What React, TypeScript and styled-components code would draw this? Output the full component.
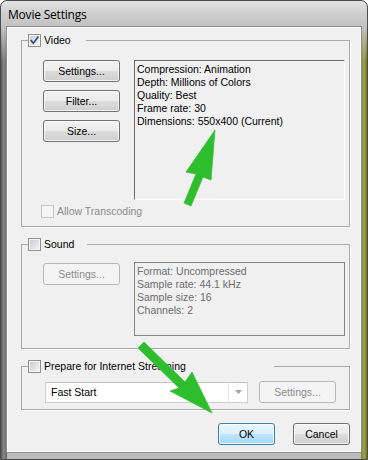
import React from "react";
import styled, { createGlobalStyle } from "styled-components";

const Global = createGlobalStyle`
  html, body { margin: 0; padding: 0; background: #ffffff; }
  body { font-family: "Liberation Sans", Arial, sans-serif; }
  #root { width: 368px; height: 460px; }
`;

const Window = styled.div`
  position: relative;
  width: 368px;
  height: 460px;
  box-sizing: border-box;
  border: 1px solid #4a4a4a;
  border-radius: 7px 7px 0 0;
  display: flex;
  flex-direction: column;
  padding: 0 6px 7px 6px;
  overflow: hidden;
  background:
    linear-gradient(to bottom, #e2e2e2 0px, #cdcdcd 14px, #c2c2c2 26px, rgba(194,194,194,0) 60px) top left / 100% 60px no-repeat,
    linear-gradient(to right, #585858, #8a8a8a 45%, #606060) left top / 6px 100% no-repeat,
    linear-gradient(to right, #7a7f2e, #a2a44c 50%, #6f7428) right top / 6px 100% no-repeat,
    linear-gradient(to bottom, #c4c4c4, #bcbcbc);
`;

const TitleBar = styled.div`
  height: 26px;
  flex: none;
  display: flex;
  align-items: center;
  padding-left: 1px;
  font-family: "Open Sans", "Noto Sans", sans-serif;
  font-size: 12px;
  letter-spacing: -0.2px;
  color: #000;
`;

const Client = styled.div`
  flex: 1;
  background: #f0f0f0;
  border: 1px solid #fbfbfb;
  box-shadow: 0 0 0 1px #8c8c8c;
  display: flex;
  flex-direction: column;
  padding: 6px 0 0 13px;
  font-family: "Liberation Sans", Arial, sans-serif;
  font-size: 10.5px;
  line-height: 13px;
  color: #000;
`;

const Group = styled.fieldset<{ $mt: number }>`
  margin: ${(p) => p.$mt}px 0 0 0;
  padding: 0;
  width: 329px;
  box-sizing: border-box;
  border: 1px solid #a9a9a9;
  box-shadow: 1px 1px 0 #ffffff;
  min-inline-size: 0;
`;

const Legend = styled.legend<{ $w: number }>`
  padding: 0;
  margin-left: 6px;
  width: ${(p) => p.$w}px;
  height: 13px;
  display: flex;
  align-items: center;
  gap: 3px;
`;

const Label = styled.span<{ $disabled?: boolean }>`
  color: ${(p) => (p.$disabled ? "#8c8c8c" : "#000")};
  white-space: nowrap;
`;

const Box = styled.span<{ $disabled?: boolean }>`
  width: 13px;
  height: 13px;
  flex: none;
  box-sizing: border-box;
  border: 1px solid ${(p) => (p.$disabled ? "#c6c6c6" : "#8e8f8f")};
  background: ${(p) =>
    p.$disabled
      ? "#f4f4f4"
      : "linear-gradient(135deg, #cbcdd0 10%, #f3f3f3 90%)"};
  box-shadow: inset 0 0 0 1px ${(p) => (p.$disabled ? "#f4f4f4" : "#f5f5f5")};
  display: flex;
  align-items: center;
  justify-content: center;
`;

const Body = styled.div<{ $pt: number; $pb: number; $pl: number }>`
  padding: ${(p) => p.$pt}px 0 ${(p) => p.$pb}px ${(p) => p.$pl}px;
  display: flex;
  flex-direction: column;
`;

const MediaRow = styled.div`
  display: flex;
  gap: 14px;
  align-items: flex-start;
`;

const ButtonColumn = styled.div<{ $mt: number }>`
  display: flex;
  flex-direction: column;
  gap: 8px;
  width: 77px;
  margin-top: ${(p) => p.$mt}px;
`;

const InfoBox = styled.div<{ $h: number; $disabled?: boolean }>`
  width: 211px;
  height: ${(p) => p.$h}px;
  box-sizing: border-box;
  padding: 2px;
  border: 1px solid;
  border-color: ${(p) =>
    p.$disabled ? "#858585" : "#6b6b6b #ffffff #ffffff #6b6b6b"};
  color: ${(p) => (p.$disabled ? "#6d6d6d" : "#000")};
  white-space: nowrap;
`;

const CheckRow = styled.div<{ $mt: number; $ml: number }>`
  display: flex;
  align-items: center;
  gap: 3px;
  height: 13px;
  margin-top: ${(p) => p.$mt}px;
  margin-left: ${(p) => p.$ml}px;
`;

type Variant = "normal" | "primary" | "disabled";

const Button = styled.button<{ $variant: Variant; $w: number }>`
  width: ${(p) => p.$w}px;
  height: 22px;
  flex: none;
  box-sizing: border-box;
  padding: 0;
  border-radius: 3px;
  font: inherit;
  cursor: default;
  border: 1px solid
    ${(p) =>
      p.$variant === "primary"
        ? "#3c7fb1"
        : p.$variant === "disabled"
        ? "#b5b9bc"
        : "#707070"};
  color: ${(p) => (p.$variant === "disabled" ? "#8c8c8c" : "#000")};
  background: ${(p) =>
    p.$variant === "primary"
      ? "linear-gradient(to bottom, #eaf6fd 0%, #d9f0fc 50%, #bee6fd 50%, #a7d9f5 100%)"
      : p.$variant === "disabled"
      ? "#f4f4f4"
      : "linear-gradient(to bottom, #f2f2f2 0%, #ebebeb 50%, #dddddd 50%, #cfcfcf 100%)"};
  box-shadow: inset 0 0 0 1px
    ${(p) => (p.$variant === "disabled" ? "#f4f4f4" : "rgba(255,255,255,0.75)")};
`;

const StreamRow = styled.div`
  display: flex;
  align-items: center;
  gap: 11px;
  height: 22px;
`;

const Combo = styled.div`
  width: 203px;
  height: 21px;
  box-sizing: border-box;
  border: 1px solid #cfcfcf;
  border-top-color: #c3c3c3;
  background: #ffffff;
  display: flex;
  align-items: stretch;
`;

const ComboText = styled.span`
  flex: 1;
  display: flex;
  align-items: center;
  padding-left: 5px;
`;

const ComboArrow = styled.span`
  width: 18px;
  border-left: 1px solid #e6e6e6;
  display: flex;
  align-items: center;
  justify-content: center;
`;

const Footer = styled.div`
  width: 329px;
  display: flex;
  justify-content: flex-end;
  gap: 18px;
  margin-top: 13px;
`;

const Overlay = styled.svg`
  position: absolute;
  left: -1px;
  top: -1px;
  width: 368px;
  height: 460px;
  pointer-events: none;
`;

const Check: React.FC<{ checked?: boolean; disabled?: boolean }> = ({
  checked,
  disabled,
}) => (
  <Box $disabled={disabled}>
    {checked && (
      <svg width="11" height="11" viewBox="0 0 11 11">
        <path
          d="M2.2 5.6 L4.3 8.2 L8.9 2.2"
          fill="none"
          stroke="#2f4c8c"
          strokeWidth="1.7"
          strokeLinecap="square"
        />
      </svg>
    )}
  </Box>
);

export default function App() {
  return (
    <>
      <Global />
      <Window>
        <TitleBar>Movie Settings</TitleBar>
        <Client>
          <Group $mt={0}>
            <Legend $w={58}>
              <Check checked />
              <Label>Video</Label>
            </Legend>
            <Body $pt={13} $pb={8} $pl={21}>
              <MediaRow>
                <ButtonColumn $mt={0}>
                  <Button $variant="normal" $w={77}>Settings...</Button>
                  <Button $variant="normal" $w={77}>Filter...</Button>
                  <Button $variant="normal" $w={77}>Size...</Button>
                </ButtonColumn>
                <InfoBox $h={140}>
                  <div>Compression: Animation</div>
                  <div>Depth: Millions of Colors</div>
                  <div>Quality: Best</div>
                  <div>Frame rate: 30</div>
                  <div>Dimensions: 550x400 (Current)</div>
                </InfoBox>
              </MediaRow>
              <CheckRow $mt={5} $ml={-2}>
                <Check disabled />
                <Label $disabled>Allow Transcoding</Label>
              </CheckRow>
            </Body>
          </Group>

          <Group $mt={11}>
            <Legend $w={59}>
              <Check />
              <Label>Sound</Label>
            </Legend>
            <Body $pt={11} $pb={12} $pl={21}>
              <MediaRow>
                <ButtonColumn $mt={1}>
                  <Button $variant="disabled" $w={77}>Settings...</Button>
                </ButtonColumn>
                <InfoBox $h={74} $disabled>
                  <div>Format: Uncompressed</div>
                  <div>Sample rate: 44.1 kHz</div>
                  <div>Sample size: 16</div>
                  <div>Channels: 2</div>
                </InfoBox>
              </MediaRow>
            </Body>
          </Group>

          <Group $mt={11}>
            <Legend $w={246}>
              <Check />
              <Label>Prepare for Internet Streaming</Label>
            </Legend>
            <Body $pt={8} $pb={6} $pl={23}>
              <StreamRow>
                <Combo>
                  <ComboText>Fast Start</ComboText>
                  <ComboArrow>
                    <svg width="7" height="4" viewBox="0 0 7 4">
                      <path d="M0 0 H7 L3.5 4 Z" fill="#a2a2a2" />
                    </svg>
                  </ComboArrow>
                </Combo>
                <Button $variant="disabled" $w={77}>Settings...</Button>
              </StreamRow>
            </Body>
          </Group>

          <Footer>
            <Button $variant="primary" $w={57}>OK</Button>
            <Button $variant="normal" $w={57}>Cancel</Button>
          </Footer>
        </Client>

        <Overlay viewBox="0 0 368 460">
          <polygon
            points="215,130 211,180 203,177 191,206 184,203 196,174 186,172"
            fill="#2dbd2d"
            stroke="#33c433"
            strokeWidth="0.8"
            strokeLinejoin="round"
          />
          <polygon
            points="212,413 192,372 185,382 144,342 138,348 179,388 170,391"
            fill="#2dbd2d"
            stroke="#33c433"
            strokeWidth="0.8"
            strokeLinejoin="round"
          />
        </Overlay>
      </Window>
    </>
  );
}
